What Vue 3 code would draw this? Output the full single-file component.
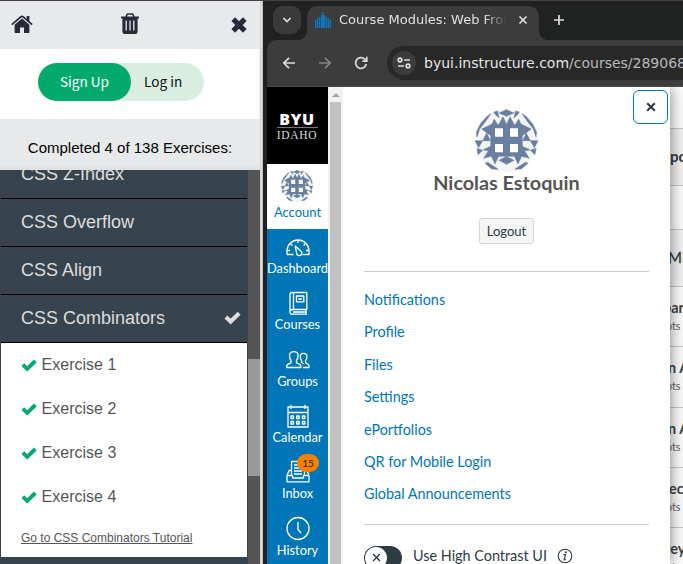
<script setup>
import { h } from 'vue'

const topics = ['CSS Z-Index', 'CSS Overflow', 'CSS Align', 'CSS Combinators']
const exercises = ['Exercise 1', 'Exercise 2', 'Exercise 3', 'Exercise 4']
const navItems = ['Dashboard', 'Courses', 'Groups', 'Calendar', 'Inbox', 'History']
const links = ['Notifications', 'Profile', 'Files', 'Settings', 'ePortfolios', 'QR for Mobile Login', 'Global Announcements']
const assignments = ['par', 'n A', 'n A', 'ect', 'rey']

const half = 'M95 2L72 12L95 22ZM95 142L72 154L95 166ZM95 47V142H71L60 165L49 142L26 148L40 126L24 122L47 112V80L20 60L47 47H71L84 23L95 47ZM47 47H68L58 30L50 47ZM0 95H23L11 116ZM23 95H46L35 72ZM6 118L23 124L9 137ZM4 70L16 45L36 22L48 14L30 40L14 60L6 84ZM56 9L68 6L72 27L62 18ZM38 160L70 181L50 180L30 163Z'
const Identicon = () =>
  h('svg', { viewBox: '0 0 189 189' }, [
    h('circle', { cx: 94.5, cy: 94.5, r: 94.5, fill: '#f4f6f6' }),
    ...['', 'matrix(-1 0 0 1 189 0)'].map((transform) => h('path', { d: half, transform, fill: '#687f9f', stroke: '#687f9f', 'stroke-width': 1.5 })),
    h('path', { d: 'M60 58h24v25H60zM105 58h24v25h-24zM60 105h24v25H60zM105 105h24v25h-24z', fill: '#fff' })
  ])
const Check = () =>
  h('svg', { viewBox: '0 0 16 13' }, [h('path', { d: 'M1.8 5.6L6.2 9.8L14.3 2', fill: 'none', stroke: 'currentColor', 'stroke-width': 3.9 })])
</script>

<template>
  <div class="screen">
    <aside class="left">
      <header class="tools">
        <svg class="home" viewBox="0 0 22 19"><path d="M11 3.6L3.6 9.8V17.2Q3.6 18 4.4 18H9V12.6H13V18H17.6Q18.4 18 18.4 17.2V9.8Z" /><path d="M.8 9.6L9.8 1.9Q11 .9 12.2 1.9L21.2 9.6" fill="none" stroke="#282a3a" stroke-width="1.8" /><path d="M15.7 1H18.4V7L15.7 4.8Z" /></svg>
        <svg class="trash" viewBox="0 0 20 22"><path d="M6 4L7 1.6Q7.3 1 8 1H12Q12.7 1 13 1.6L14 4" fill="none" stroke="#282a3a" stroke-width="1.6" /><path d="M1 3.6H19V5.4H17.6V18.5Q17.6 21 15.4 21H4.6Q2.4 21 2.4 18.5V5.4H1Z" /><path d="M6.2 7.5V17.5M10 7.5V17.5M13.8 7.5V17.5" stroke="#e7e9eb" stroke-width="1.3" /></svg>
        <svg class="close" viewBox="0 0 18 18"><path d="M3.2 3.2L14.8 14.8M14.8 3.2L3.2 14.8" stroke="#282a3a" stroke-width="5.2" /></svg>
      </header>
      <div class="auth"><div class="pill"><span class="signup">Sign Up</span><span class="login">Log in</span></div></div>
      <div class="progress">Completed 4 of 138 Exercises:</div>
      <div class="scroller">
        <div class="list">
          <div v-for="(t, i) in topics" :key="t" class="topic" :class="{ first: i === 0 }"><span>{{ t }}</span><Check v-if="i === 3" class="check" /></div>
          <div class="panel">
            <div v-for="e in exercises" :key="e" class="exercise"><Check class="check" /><span>{{ e }}</span></div>
            <a class="tutorial">Go to CSS Combinators Tutorial</a>
          </div>
        </div>
        <div class="bar"><div class="thumb"></div></div>
      </div>
    </aside>
    <div class="gutter"></div>

    <section class="browser">
      <div class="tabs">
        <div class="tabmenu"><svg viewBox="0 0 10 8"><path d="M1.4 2L5 5.6L8.6 2" /></svg></div>
        <div class="tab">
          <svg class="favicon" viewBox="0 0 16 16"><path d="M.7 8V16M2.7 6V16M4.7 5V16M6.7 3V16M9.3 3V16M11.3 5V16M13.3 6V16M15.3 8V16M8 0V16" /></svg>
          <span class="title">Course Modules: Web Front</span>
          <svg class="x" viewBox="0 0 10 10"><path d="M1.5 1.5L8.5 8.5M8.5 1.5L1.5 8.5" /></svg>
        </div>
        <svg class="plus" viewBox="0 0 12 12"><path d="M6 1V11M1 6H11" /></svg>
      </div>
      <div class="toolbar">
        <svg class="nav-arrow" viewBox="0 0 14 14"><path d="M13 7H2M7 1.8L1.8 7L7 12.2" /></svg>
        <svg class="nav-arrow off" viewBox="0 0 14 14"><path d="M1 7H12M7 1.8L12.2 7L7 12.2" /></svg>
        <svg class="nav-arrow" viewBox="0 0 14 14"><path d="M12.3 8A5.4 5.4 0 1 1 10.8 3.1L12.5 4.8M12.8 .8V5.2H8.4" /></svg>
        <div class="address">
          <div class="site"><svg viewBox="0 0 14 12"><path d="M7 3H13M1 9H7" /><circle cx="3" cy="3" r="1.8" /><circle cx="11" cy="9" r="1.8" /></svg></div>
          <span class="url">byui.instructure.com<i>/courses/289068</i></span>
        </div>
      </div>

      <div class="page">
        <nav class="global">
          <div class="logo"><b>BYU</b><span>IDAHO</span></div>
          <div class="account"><Identicon class="small-avatar" /><span>Account</span></div>
          <div v-for="n in navItems" :key="n" class="item">
            <div class="icon">
              <svg viewBox="0 0 26 26">
                <g v-if="n === 'Dashboard'"><path d="M2 20.5V17A11 11 0 0 1 24 17V20.5H17.5M2 20.5H8.5M13 6V9M5.4 9.6L7.4 11.4M20.6 9.6L18.6 11.4M2 16.5H5M24 16.5H21" /><path d="M10.2 12L15.2 16.6A2.6 2.6 0 1 1 11.6 19Z" /></g>
                <g v-else-if="n === 'Courses'"><path d="M22 19.5H7.5Q5 19.5 5 22T7.5 24.2H22M5 22V4.6Q5 2.5 7 2.5H21.8V19.5M8.5 2.5V19.5M21 19.5V24M8 22H22" /><path d="M11.5 6H18.8V11.8H11.5ZM13.3 9H17" /></g>
                <g v-else-if="n === 'Groups'"><path d="M1.8 20.5V18.6Q2 17.2 6 15.8V13.3Q4.5 11.8 4.5 8.7Q4.5 4.7 8.8 4.7T13.1 8.7Q13.1 11.8 11.5 13.3V15.8Q15.6 17.2 15.8 18.6V20.5Z" /><path d="M17.8 20.5H24V18.5Q23.8 17 20.6 15.8V13.5Q21.9 12.3 21.9 9.4Q21.9 6.3 18.6 6.3T15.3 9.4Q15.3 12.3 16.6 13.5V15.5Q18 16 18.5 17" /></g>
                <g v-else-if="n === 'Calendar'"><path d="M3 4H23V24H3ZM3 9.5H23M6 1.8V6M20 1.8V6" /><path d="M6 13h2.5v2.5H6zM11.7 13h2.5v2.5h-2.5zM17.4 13h2.5v2.5h-2.5zM6 18.5h2.5v2.5H6zM11.7 18.5h2.5v2.5h-2.5zM17.4 18.5h2.5v2.5h-2.5z" /></g>
                <g v-else-if="n === 'Inbox'"><path d="M2 16.5V22.8H24V16.5H18.5V19H7.5V16.5ZM2 16.5L4 11.5H6.5M24 16.5L22 11.5M6.5 16V2.5H19.5V16M9 6H16M9 9H17M9 12H17M9 15H17" /></g>
                <g v-else><circle cx="13" cy="12.5" r="11" /><path d="M13 6V13.5L16.2 17.1" /></g>
              </svg>
              <span v-if="n === 'Inbox'" class="badge">15</span>
            </div>
            <span class="label">{{ n }}</span>
          </div>
        </nav>
        <div class="sidebar-scroll"><div class="up"></div><div class="track-thumb"></div></div>

        <main class="tray">
          <button class="dismiss"><svg viewBox="0 0 10 10"><path d="M1.2 1.2L8.8 8.8M8.8 1.2L1.2 8.8" /></svg></button>
          <Identicon class="avatar" />
          <h1>Nicolas Estoquin</h1>
          <button class="logout">Logout</button>
          <ul><li v-for="l in links" :key="l">{{ l }}</li></ul>
          <div class="contrast">
            <div class="toggle"><div class="knob"><svg viewBox="0 0 10 10"><path d="M1.2 1.2L8.8 8.8M8.8 1.2L1.2 8.8" /></svg></div></div>
            <span>Use High Contrast UI</span>
            <svg class="info" viewBox="0 0 16 16"><circle cx="8" cy="8" r="6.8" /><path d="M6.5 6.6H8.5L7.2 11.8H9" /><circle class="dot" cx="8.9" cy="4.3" r="1" /></svg>
          </div>
        </main>

        <div class="course">
          <div class="row blank"></div>
          <div class="row module"><b>po</b></div>
          <div class="row gap"></div>
          <div class="row module"><span>ME</span></div>
          <div v-for="(a, i) in assignments" :key="i" class="row task"><b :class="'t' + i">{{ a }}</b><small>pts</small></div>
        </div>
      </div>
    </section>
  </div>
</template>

<style>
body { overflow: hidden; }
</style>
<style scoped>
* { box-sizing: border-box; }
.screen { width: 683px; height: 564px; display: flex; overflow: hidden; border-top: 1px solid #454347; font-family: "Liberation Sans", Arial, sans-serif; background: #202222; }
svg { display: block; flex: none; }
.left { width: 260px; display: flex; flex-direction: column; flex: none; background: #e7e9eb; }
.tools { height: 48px; display: flex; justify-content: space-between; align-items: center; padding: 0 12px 0 11px; fill: #282a3a; flex: none; }
.home { width: 22px; height: 19px; margin-top: -2px; }
.trash { width: 20px; height: 22px; margin-top: -2px; margin-left: -4px; }
.close { width: 18px; height: 18px; }
.auth { height: 70px; width: 259px; background: #fff; padding: 14px 0 0 38px; flex: none; }
.pill { width: 166px; height: 38px; border-radius: 19px; background: #d9eee1; display: flex; font: 13.6px/36px "Noto Sans CJK SC", sans-serif; color: #111; }
.signup { width: 93px; border-radius: 19px; background: #04aa6d; color: #fff; text-align: center; }
.login { padding-left: 13px; }
.progress { height: 51px; flex: none; text-align: center; font-size: 15px; line-height: 58px; color: #000; background: linear-gradient(#e7e9eb 90%, #dcdee0); }
.scroller { flex: 1; display: flex; min-height: 0; background: #38444d; }
.list { width: 248px; padding: 0 1px; overflow: hidden; }
.topic { height: 48px; border-bottom: 1px solid #000; color: #ddd; font-size: 18px; line-height: 44px; padding: 0 6px 2px 20px; display: flex; justify-content: space-between; align-items: center; }
.first { height: 29px; align-items: flex-end; overflow: hidden; }
.topic .check { width: 17px; height: 14px; margin-top: 1px; }
.panel { height: 214px; background: #fff; color: #555; }
.exercise { height: 44px; padding-left: 20px; display: flex; align-items: center; gap: 4.6px; font-size: 16px; }
.exercise .check { width: 16px; height: 13px; color: #04aa6d; }
.tutorial { display: block; padding: 12px 0 0 20px; font-size: 12px; line-height: 14px; text-decoration: underline; }
.bar { width: 12px; background: #555; padding-top: 189px; }
.thumb { height: 117px; background: #999; }
.gutter { width: 3px; background: linear-gradient(90deg, #d3d4d2, #e0e1df 60%, #a8a9a7); flex: none; }
.browser { width: 420px; padding-left: 4px; flex: none; background: #202222; border-radius: 8px 0 0; }
.tabs { height: 39px; display: flex; padding-top: 5px; align-items: flex-start; }
.tabmenu { width: 28px; height: 28px; border-radius: 9px; background: #3a3a3a; margin: 0 6px 0 6px; display: grid; place-items: center; }
.tabmenu svg { width: 10px; height: 8px; }
.tabs svg path, .toolbar svg { fill: none; stroke: #ddd; stroke-width: 1.7; }
.tab { width: 232px; height: 34px; position: relative; border-radius: 10px 10px 0 0; background: #3c3c3c; display: flex; align-items: center; padding: 0 11px 6px 8px; }
.tab::before, .tab::after { content: ""; position: absolute; bottom: 0; width: 10px; height: 10px; }
.tab::before { left: -10px; background: radial-gradient(circle at 0 0, #202222 10px, #3c3c3c 10.5px); }
.tab::after { right: -10px; background: radial-gradient(circle at 100% 0, #202222 10px, #3c3c3c 10.5px); }
.favicon { width: 16px; height: 16px; }
.tabs .favicon path { stroke: #0a78bf; stroke-width: 1.4; }
.title { width: 168px; margin-left: 8px; overflow: hidden; white-space: nowrap; font: 13px/18px "DejaVu Sans", sans-serif; color: #e0e0e0; -webkit-mask-image: linear-gradient(90deg, #000 86%, transparent); mask-image: linear-gradient(90deg, #000 86%, transparent); }
.x { width: 10px; height: 10px; margin-left: auto; }
.plus { width: 12px; height: 12px; margin: 8px 0 0 14px; }
.toolbar { height: 47px; background: #3c3c3c; border-radius: 9px 0 0; border-bottom: 1px solid #4a4a4a; display: flex; align-items: center; padding-left: 15px; gap: 22px; }
.nav-arrow { width: 14px; height: 14px; }
.off { opacity: .45; }
.address { height: 34px; width: 310px; flex: none; border-radius: 17px 0 0 17px; background: #282828; margin-left: -3px; display: flex; align-items: center; padding-left: 5px; }
.site { width: 24px; height: 24px; border-radius: 50%; background: #3c3c3c; display: grid; place-items: center; }
.site svg { width: 14px; height: 12px; }
.url { margin-left: 8px; white-space: nowrap; font: 14px/20px "DejaVu Sans", sans-serif; color: #e4e4e4; }
.url i { font-style: normal; color: #b8b8b8; }
.page { height: 477px; display: flex; font-family: Lato, sans-serif; background: #fff; overflow: hidden; }
.global { width: 61px; background: #0076b8; flex: none; }
.logo { height: 77px; background: #000; color: #fff; display: flex; flex-direction: column; align-items: center; padding: 24px 1px 0 0; }
.logo b { width: 41px; border-bottom: 1px solid #777; font: 900 16px/16px "Noto Sans", sans-serif; letter-spacing: .6px; display: flex; justify-content: center; white-space: nowrap; }
.logo span { font: 11.5px/15px "Liberation Serif", serif; letter-spacing: .7px; color: #ddd; }
.account { height: 65px; background: #fff; color: #0076b8; display: flex; flex-direction: column; align-items: center; padding-top: 6px; font-size: 13px; line-height: 20px; }
.small-avatar { width: 32px; height: 32px; margin-right: 1px; }
.item { height: 56.33px; padding-top: 5px; color: #fff; text-align: center; font-size: 12.8px; }
.icon { position: relative; height: 26px; display: flex; justify-content: center; }
.icon svg { width: 26px; height: 26px; fill: none; stroke: #fff; stroke-width: 1.3; stroke-linejoin: round; }
.label { display: block; line-height: 17px; white-space: nowrap; }
.badge { position: absolute; left: 30px; top: -5px; width: 22px; height: 18px; border-radius: 9px; background: #f68000; color: #222; font-size: 10px; line-height: 18px; }
.sidebar-scroll { width: 15px; flex: none; background: #f1f1f1; padding: 6px 2px 0; }
.up { border: 4px solid transparent; border-top: 0; border-bottom-color: #a3a3a3; width: 8px; margin: 0 auto 5px; }
.track-thumb { height: 470px; background: #c1c1c1; }
.tray { width: 327px; flex: none; position: relative; z-index: 1; background: #fff; box-shadow: 0 0 16px #0008; clip-path: inset(0 -13px 0 0); padding: 22px 21px 0; display: flex; flex-direction: column; align-items: center; color: #2d3b45; }
.dismiss { position: absolute; right: 2px; top: 3px; width: 35px; height: 34px; border: 1px solid #0076b8; border-radius: 6px; background: #fff; display: grid; place-items: center; padding: 0; }
.dismiss svg { width: 10px; height: 10px; stroke: #2d3b45; stroke-width: 2.1; }
.avatar { width: 63px; height: 63px; }
h1 { margin: 0; font-size: 19.8px; line-height: 21px; color: #555; font-weight: 700; white-space: nowrap; }
.logout { margin: 25px 0 27px; height: 26px; width: 55px; border: 1px solid #d5d6d7; border-radius: 3px; background: #f5f5f5; color: #2d3b45; padding: 0 0 1px; font: 13px/22px Lato, sans-serif; flex: none; }
ul { width: 285px; margin: 0; padding: 12px 0 13px; border: solid #c7cdd1; border-width: 1px 0; list-style: none; color: #0076b8; font-size: 14.4px; flex: none; }
li { height: 32.4px; line-height: 32.4px; }
.contrast { width: 285px; display: flex; align-items: flex-start; padding-top: 21px; font-size: 14.4px; line-height: 20px; }
.toggle { width: 38px; height: 24px; border-radius: 12px; background: #2d3b45; padding: 1px; margin-right: 11px; flex: none; }
.knob { width: 22px; height: 22px; border-radius: 50%; background: #fff; display: grid; place-items: center; }
.knob svg { width: 9px; height: 9px; stroke: #2d3b45; stroke-width: 1.5; }
.info { width: 16px; height: 16px; margin: 2px 0 0 10px; fill: none; stroke: #2d3b45; stroke-width: 1.1; }
.dot { fill: #2d3b45; stroke: none; }
.course { width: 13px; flex: none; overflow: hidden; color: #333b42; }
.row { border-bottom: 1px solid #c7cdd1; display: flex; flex-direction: column; align-items: flex-start; white-space: nowrap; }
.blank { height: 42px; }
.module { height: 57px; background: #f5f5f5; font-size: 15px; line-height: 54px; }
.module span { margin-left: -2px; -webkit-text-stroke: .3px; }
.gap { height: 44px; }
.task { height: 60.3px; padding-top: 11px; }
.task b { font-size: 14.4px; line-height: 19px; color: #444; }
.t0 { margin-left: -7px; }
.t1, .t2 { margin-left: -2px; }
.t3 { margin-left: -1px; }
.t4 { margin-left: -5px; }
.task small { font-size: 10.8px; line-height: 17px; color: #666; margin-left: -4px; }
</style>
